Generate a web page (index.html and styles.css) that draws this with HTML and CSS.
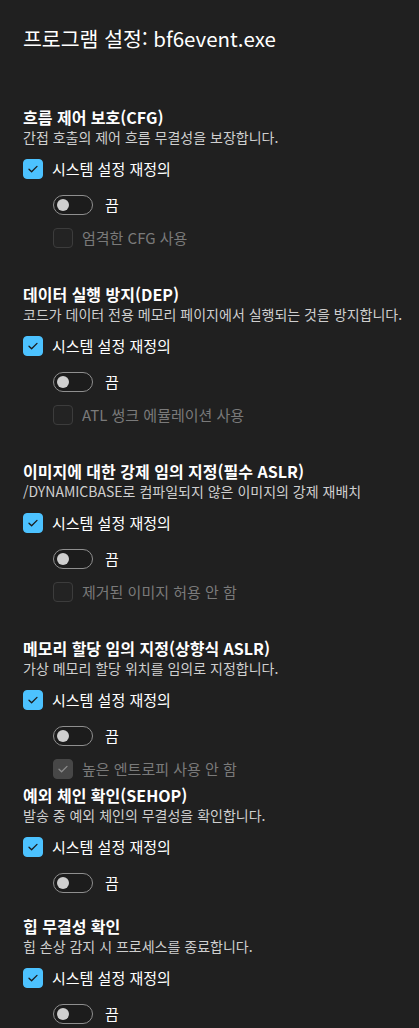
FILE: index.html
```html
<!DOCTYPE html>
<html lang="ko">
<head>
    <meta charset="UTF-8">
    <meta name="viewport" content="width=device-width, initial-scale=1.0">
    <title>프로그램 설정</title>
    <link rel="stylesheet" href="styles.css">
</head>
<body>

    <h1 class="title">프로그램 설정: bf6event.exe</h1>

    <section class="setting">
        <h2 class="setting-name">흐름 제어 보호(CFG)</h2>
        <p class="setting-desc">간접 호출의 제어 흐름 무결성을 보장합니다.</p>
        <label class="check-row">
            <span class="box checked"><svg viewBox="0 0 20 20"><path d="M6 10.2 L8.6 12.8 L14 7.4"/></svg></span>
            시스템 설정 재정의
        </label>
        <div class="switch-row">
            <span class="switch"><span class="knob"></span></span>
            끔
        </div>
        <label class="check-row sub disabled">
            <span class="box"></span>
            엄격한 CFG 사용
        </label>
    </section>

    <section class="setting">
        <h2 class="setting-name">데이터 실행 방지(DEP)</h2>
        <p class="setting-desc">코드가 데이터 전용 메모리 페이지에서 실행되는 것을 방지합니다.</p>
        <label class="check-row">
            <span class="box checked"><svg viewBox="0 0 20 20"><path d="M6 10.2 L8.6 12.8 L14 7.4"/></svg></span>
            시스템 설정 재정의
        </label>
        <div class="switch-row">
            <span class="switch"><span class="knob"></span></span>
            끔
        </div>
        <label class="check-row sub disabled">
            <span class="box"></span>
            ATL 썽크 에뮬레이션 사용
        </label>
    </section>

    <section class="setting">
        <h2 class="setting-name">이미지에 대한 강제 임의 지정(필수 ASLR)</h2>
        <p class="setting-desc">/DYNAMICBASE로 컴파일되지 않은 이미지의 강제 재배치</p>
        <label class="check-row">
            <span class="box checked"><svg viewBox="0 0 20 20"><path d="M6 10.2 L8.6 12.8 L14 7.4"/></svg></span>
            시스템 설정 재정의
        </label>
        <div class="switch-row">
            <span class="switch"><span class="knob"></span></span>
            끔
        </div>
        <label class="check-row sub disabled">
            <span class="box"></span>
            제거된 이미지 허용 안 함
        </label>
    </section>

    <section class="setting">
        <h2 class="setting-name">메모리 할당 임의 지정(상향식 ASLR)</h2>
        <p class="setting-desc">가상 메모리 할당 위치를 임의로 지정합니다.</p>
        <label class="check-row">
            <span class="box checked"><svg viewBox="0 0 20 20"><path d="M6 10.2 L8.6 12.8 L14 7.4"/></svg></span>
            시스템 설정 재정의
        </label>
        <div class="switch-row">
            <span class="switch"><span class="knob"></span></span>
            끔
        </div>
        <label class="check-row sub disabled">
            <span class="box checked"><svg viewBox="0 0 20 20"><path d="M6 10.2 L8.6 12.8 L14 7.4"/></svg></span>
            높은 엔트로피 사용 안 함
        </label>
    </section>

    <section class="setting tight">
        <h2 class="setting-name">예외 체인 확인(SEHOP)</h2>
        <p class="setting-desc">발송 중 예외 체인의 무결성을 확인합니다.</p>
        <label class="check-row">
            <span class="box checked"><svg viewBox="0 0 20 20"><path d="M6 10.2 L8.6 12.8 L14 7.4"/></svg></span>
            시스템 설정 재정의
        </label>
        <div class="switch-row">
            <span class="switch"><span class="knob"></span></span>
            끔
        </div>
    </section>

    <section class="setting near">
        <h2 class="setting-name">힙 무결성 확인</h2>
        <p class="setting-desc">힙 손상 감지 시 프로세스를 종료합니다.</p>
        <label class="check-row">
            <span class="box checked"><svg viewBox="0 0 20 20"><path d="M6 10.2 L8.6 12.8 L14 7.4"/></svg></span>
            시스템 설정 재정의
        </label>
        <div class="switch-row">
            <span class="switch"><span class="knob"></span></span>
            끔
        </div>
    </section>

</body>
</html>
```

FILE: styles.css
```css
body {
    margin: 0;
    padding: 24px 23px 0;
    background-color: #202020;
    color: #ffffff;
    font-family: "Noto Sans CJK KR", "Noto Sans", sans-serif;
    overflow: hidden;
}
.title {
    margin: 0 0 55px;
    font-size: 20.5px;
    font-weight: 400;
    line-height: 28px;
}
.setting {
    margin-top: 36px;
}
.title + .setting {
    margin-top: 0;
}
.setting.tight {
    margin-top: 6px;
}
.setting.near {
    margin-top: 23px;
}
.setting-name {
    margin: 0;
    font-size: 16px;
    font-weight: 700;
    line-height: 20px;
    white-space: nowrap;
}
.setting-desc {
    margin: 0;
    font-size: 14px;
    line-height: 20px;
    color: #cfcfcf;
    white-space: nowrap;
}
.check-row,
.switch-row {
    display: flex;
    align-items: center;
    height: 20px;
    font-size: 15px;
    line-height: 20px;
}
.check-row {
    gap: 9px;
    margin-top: 12px;
}
.check-row.sub {
    margin-top: 13px;
    margin-left: 30px;
}
.switch-row {
    gap: 12px;
    margin-top: 16px;
    margin-left: 30px;
}
.box {
    width: 20px;
    height: 20px;
    box-sizing: border-box;
    border-radius: 4px;
    border: 1px solid #9a9a9a;
    flex: none;
}
.box svg {
    display: block;
    width: 20px;
    height: 20px;
    margin: -1px;
}
.box path {
    fill: none;
    stroke: #1a1a1a;
    stroke-width: 1.3;
    stroke-linecap: round;
    stroke-linejoin: round;
}
.box.checked {
    background-color: #4cc2ff;
    border-color: #4cc2ff;
}
.disabled {
    color: #7a7a7a;
}
.disabled .box {
    border-color: #3c3c3c;
    background-color: #232323;
}
.disabled .box.checked {
    background-color: #474747;
    border-color: #474747;
}
.disabled .box.checked path {
    stroke: #8c8c8c;
}
.switch {
    display: flex;
    align-items: center;
    width: 40px;
    height: 20px;
    box-sizing: border-box;
    padding-left: 3px;
    border: 1px solid #8f8f8f;
    border-radius: 10px;
    background-color: #1c1c1c;
    flex: none;
}
.knob {
    width: 12px;
    height: 12px;
    border-radius: 50%;
    background-color: #cfcfcf;
}
```
